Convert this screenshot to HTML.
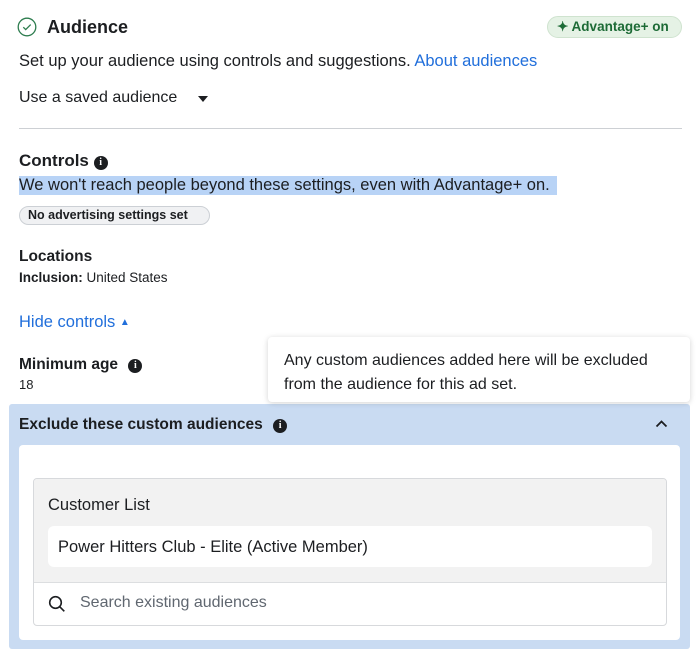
<!DOCTYPE html>
<html><head><style>
*{margin:0;padding:0;box-sizing:border-box}
body{width:700px;height:658px;background:#fff;font-family:"Liberation Sans",sans-serif;color:#1c1e21;position:relative;overflow:hidden}
.a{position:absolute;white-space:nowrap}
.info{display:inline-block;width:14px;height:14px;border-radius:50%;background:#1c1e21;color:#fff;font:bold 10px/14px "Liberation Serif",serif;text-align:center;vertical-align:1px}
</style></head><body>
<svg class="a" style="left:17px;top:17px" width="20" height="20" viewBox="0 0 20 20"><circle cx="10" cy="10" r="8.8" fill="none" stroke="#2e7d4f" stroke-width="1.3"/><path d="M6.3 10.2l2.4 2.4 5-5" fill="none" stroke="#2e7d4f" stroke-width="1.3"/></svg>
<div class="a" style="left:47px;top:17px;font-size:18px;font-weight:bold">Audience</div>
<div class="a" style="left:547px;top:16px;width:135px;height:22px;border-radius:11px;background:#e5f2e5;border:1px solid #cfe3cf;color:#1d6b36;font-size:13.5px;font-weight:bold;line-height:20px;padding-left:9px">✦ Advantage+ on</div>
<div class="a" style="left:19px;top:52px;font-size:16.5px">Set up your audience using controls and suggestions. <span style="color:#216fdb">About audiences</span></div>
<div class="a" style="left:19px;top:89px;font-size:16px">Use a saved audience</div>
<svg class="a" style="left:197px;top:95px" width="12" height="8"><path d="M1 1h10L6 7z" fill="#1c1e21"/></svg>
<div class="a" style="left:19px;top:128px;width:663px;height:1px;background:#cdd0d4"></div>
<div class="a" style="left:19px;top:151px;font-size:17px;font-weight:bold">Controls <span class="info">i</span></div>
<div class="a" style="left:19px;top:176px;width:538px;height:19px;background:#b8d3f6"></div>
<div class="a" style="left:19px;top:176px;font-size:16.5px">We won't reach people beyond these settings, even with Advantage+ on.</div>
<div class="a" style="left:19px;top:206px;width:191px;height:19px;border-radius:10px;background:#f0f1f3;border:1px solid #ccd0d5;font-size:12.5px;font-weight:bold;line-height:17px;padding-left:8px">No advertising settings set</div>
<div class="a" style="left:19px;top:248px;font-size:15.5px;font-weight:bold">Locations</div>
<div class="a" style="left:19px;top:270px;font-size:13.5px"><b>Inclusion:</b> United States</div>
<div class="a" style="left:19px;top:313px;font-size:16.5px;color:#216fdb">Hide controls <span style="font-size:10px;vertical-align:2px">▲</span></div>
<div class="a" style="left:19px;top:356px;font-size:15.5px;font-weight:bold">Minimum age <span class="info" style="margin-left:6px">i</span></div>
<div class="a" style="left:19px;top:377px;font-size:13px">18</div>
<div class="a" style="left:9px;top:404px;width:681px;height:245px;background:#c9dbf2;border-radius:3px"></div>
<div class="a" style="left:268px;top:337px;width:422px;height:65px;background:#fff;border-radius:4px;box-shadow:0 1px 6px rgba(0,0,0,.18)"></div>
<div class="a" style="left:284px;top:349px;font-size:16px;line-height:24px">Any custom audiences added here will be excluded<br>from the audience for this ad set.</div>
<div class="a" style="left:19px;top:416px;font-size:15.5px;font-weight:bold">Exclude these custom audiences <span class="info" style="margin-left:6px">i</span></div>
<svg class="a" style="left:655px;top:419px" width="13" height="9"><path d="M1.5 7.5L6.5 2.5l5 5" fill="none" stroke="#1c1e21" stroke-width="1.8"/></svg>
<div class="a" style="left:19px;top:445px;width:661px;height:195px;background:#fff;border-radius:4px"></div>
<div class="a" style="left:33px;top:478px;width:634px;height:148px;border:1px solid #d7d9dc;border-radius:4px;overflow:hidden">
 <div style="height:104px;background:#f2f2f2;border-bottom:1px solid #dcdee0;position:relative">
  <div class="a" style="left:14px;top:17px;font-size:16.5px">Customer List</div>
  <div class="a" style="left:14px;top:47px;width:604px;height:41px;background:#fff;border-radius:6px;font-size:16.5px;line-height:42px;padding-left:10px">Power Hitters Club - Elite (Active Member)</div>
 </div>
 <svg class="a" style="left:14px;top:116px" width="18" height="18" viewBox="0 0 18 18"><circle cx="7.5" cy="7.5" r="5.8" fill="none" stroke="#1c1e21" stroke-width="1.6"/><path d="M11.8 11.8l4.5 4.5" stroke="#1c1e21" stroke-width="1.6"/></svg>
 <div class="a" style="left:46px;top:115px;font-size:16px;color:#606770">Search existing audiences</div>
</div>
</body></html>
